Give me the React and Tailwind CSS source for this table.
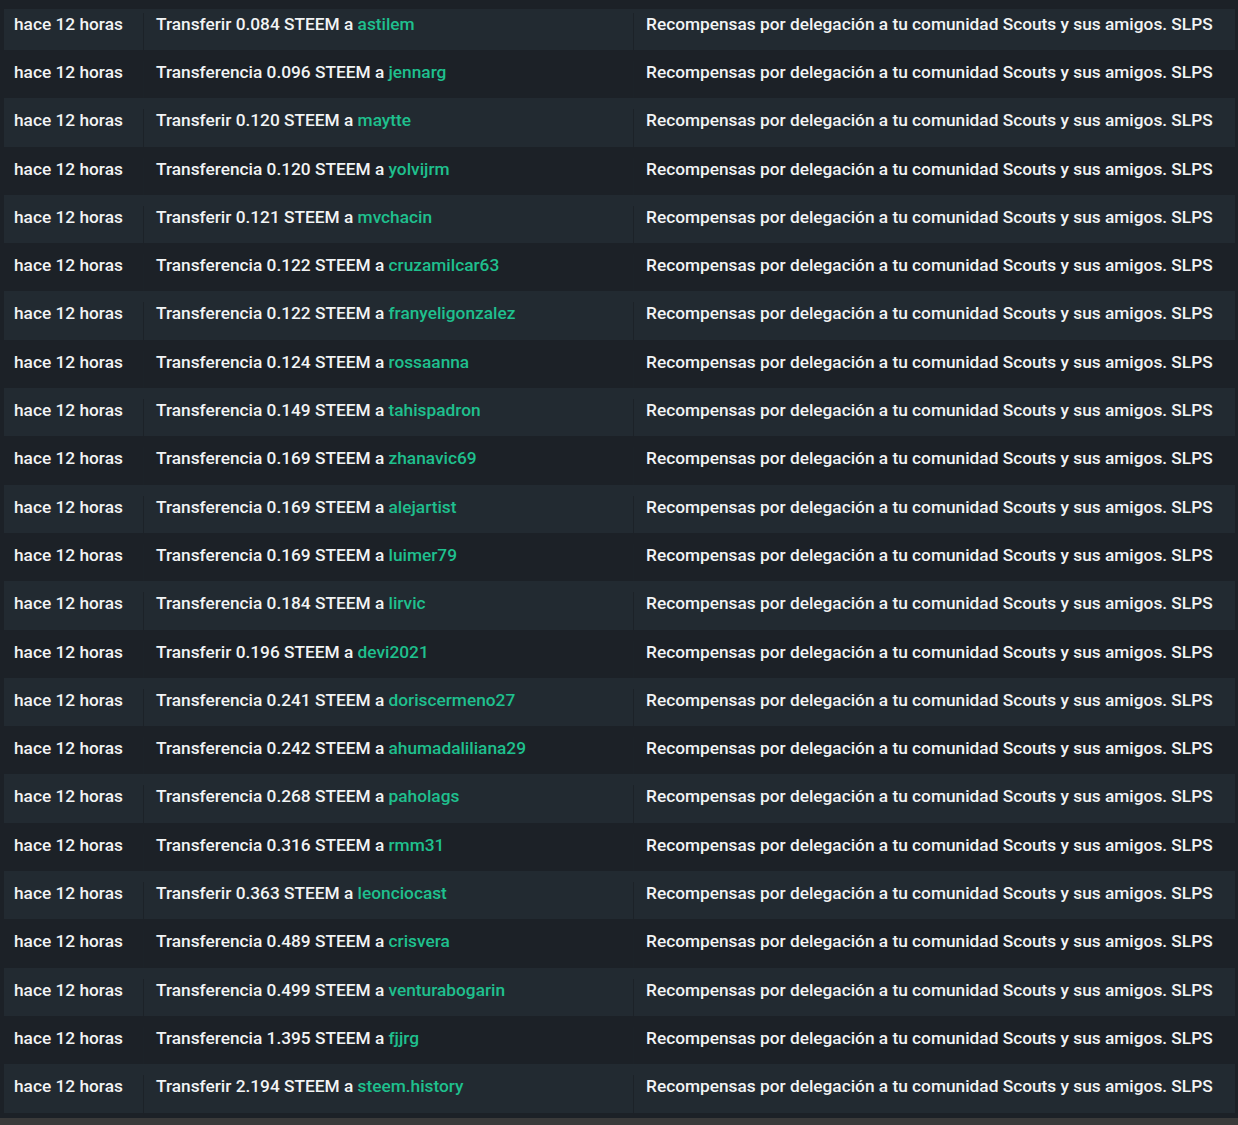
import React from 'react'

const rows = [
  ['Transferir', '0.084', 'astilem'],
  ['Transferencia', '0.096', 'jennarg'],
  ['Transferir', '0.120', 'maytte'],
  ['Transferencia', '0.120', 'yolvijrm'],
  ['Transferir', '0.121', 'mvchacin'],
  ['Transferencia', '0.122', 'cruzamilcar63'],
  ['Transferencia', '0.122', 'franyeligonzalez'],
  ['Transferencia', '0.124', 'rossaanna'],
  ['Transferencia', '0.149', 'tahispadron'],
  ['Transferencia', '0.169', 'zhanavic69'],
  ['Transferencia', '0.169', 'alejartist'],
  ['Transferencia', '0.169', 'luimer79'],
  ['Transferencia', '0.184', 'lirvic'],
  ['Transferir', '0.196', 'devi2021'],
  ['Transferencia', '0.241', 'doriscermeno27'],
  ['Transferencia', '0.242', 'ahumadaliliana29'],
  ['Transferencia', '0.268', 'paholags'],
  ['Transferencia', '0.316', 'rmm31'],
  ['Transferir', '0.363', 'leonciocast'],
  ['Transferencia', '0.489', 'crisvera'],
  ['Transferencia', '0.499', 'venturabogarin'],
  ['Transferencia', '1.395', 'fjjrg'],
  ['Transferir', '2.194', 'steem.history'],
]

const memo = 'Recompensas por delegación a tu comunidad Scouts y sus amigos. SLPS'

export default function App() {
  return (
    <div className="w-[1238px] h-[1125px] overflow-hidden bg-[#1c2127] text-[#f2f4f5] text-[17.3px] font-medium font-['Roboto',sans-serif] flex flex-col">
      <div className="h-[9px] shrink-0" />
      <div className="flex flex-col pl-[4px] pr-[3px]">
        {rows.map(([verb, amount, user], i) => {
          const light = i % 2 === 0
          const first = i === 0
          return (
            <div
              key={i}
              className={`flex ${light ? 'bg-[#222a31]' : 'bg-[#1c2127]'} ${first ? 'h-[41px] pt-[4px]' : 'h-[48.3px] pt-[11px]'}`}
            >
              <div className="w-[140px] shrink-0 pl-[10px] border-r border-[#1c2228] leading-[22px] whitespace-nowrap">hace 12 horas</div>
              <div className="w-[490px] shrink-0 pl-[12px] border-r border-[#1c2228] leading-[22px] whitespace-nowrap">
                {verb} {amount} STEEM a <span className="text-[#1fc08e]">{user}</span>
              </div>
              <div className="flex-1 pl-[12px] leading-[22px] whitespace-nowrap">{memo}</div>
            </div>
          )
        })}
      </div>
      <div className="h-[5px] shrink-0" />
      <div className="flex-1 bg-[#3a3a3a]" />
    </div>
  )
}
